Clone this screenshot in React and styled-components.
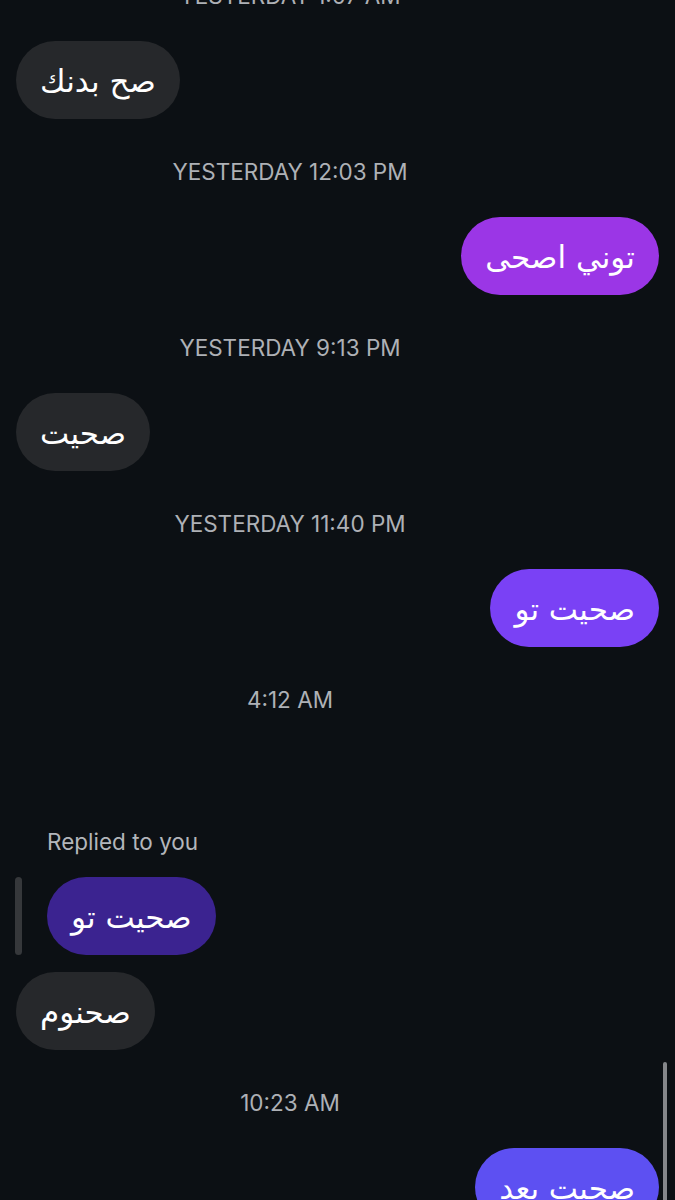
import React from 'react';
import styled, { createGlobalStyle } from 'styled-components';

const GlobalStyle = createGlobalStyle`
  html, body {
    margin: 0;
    padding: 0;
    background: #0c1014;
  }
  body {
    width: 675px;
    height: 1200px;
    overflow: hidden;
    font-family: Inter, Roboto, "Liberation Sans", sans-serif;
  }
`;

const Screen = styled.div`
  position: relative;
  width: 675px;
  height: 1200px;
  overflow: hidden;
  background: #0c1014;
`;

const Thread = styled.div`
  display: flex;
  flex-direction: column;
  margin-top: -15px;
`;

const Stamp = styled.div`
  width: 580px;
  height: 22px;
  line-height: 22px;
  margin: ${(p) => (p.$first ? '0' : '42px')} 0 34px;
  text-align: center;
  font-size: 22.5px;
  color: #aeb1b6;
  white-space: nowrap;
`;

const Row = styled.div`
  display: flex;
  justify-content: ${(p) => (p.$out ? 'flex-end' : 'flex-start')};
  padding: 0 16px;
`;

const Bubble = styled.div`
  height: 78px;
  box-sizing: border-box;
  padding: 2px 24px 0;
  border-radius: 39px;
  display: flex;
  align-items: center;
  direction: rtl;
  font-family: "DejaVu Sans", "Noto Sans", sans-serif;
  font-size: 31px;
  color: #ffffff;
  background: ${(p) => p.$bg || '#26282b'};
  white-space: nowrap;
`;

const ReplyBlock = styled.div`
  display: flex;
  flex-direction: column;
  margin-top: 86px;
  margin-bottom: 17px;
`;

const ReplyLabel = styled.div`
  padding-left: 47px;
  font-size: 22.5px;
  line-height: 22px;
  color: #b3b6bb;
  margin-bottom: 24px;
`;

const ReplyRow = styled.div`
  display: flex;
  align-items: stretch;
  gap: 25px;
  padding-left: 15px;
`;

const QuoteBar = styled.div`
  width: 7px;
  border-radius: 4px;
  background: #36383b;
`;

const ScrollThumb = styled.div`
  position: absolute;
  right: 8px;
  top: 1062px;
  width: 4px;
  height: 150px;
  border-radius: 2px;
  background: #85878a;
`;

const App = () => {
  return (
    <Screen>
      <GlobalStyle />
      <Thread>
        <Stamp $first>YESTERDAY 1:07 AM</Stamp>
        <Row>
          <Bubble>صح بدنك</Bubble>
        </Row>

        <Stamp>YESTERDAY 12:03 PM</Stamp>
        <Row $out>
          <Bubble $bg="#9b36e6">توني اصحى</Bubble>
        </Row>

        <Stamp>YESTERDAY 9:13 PM</Stamp>
        <Row>
          <Bubble>صحيت</Bubble>
        </Row>

        <Stamp>YESTERDAY 11:40 PM</Stamp>
        <Row $out>
          <Bubble $bg="#7a41f5">صحيت تو</Bubble>
        </Row>

        <Stamp>4:12 AM</Stamp>

        <ReplyBlock>
          <ReplyLabel>Replied to you</ReplyLabel>
          <ReplyRow>
            <QuoteBar />
            <Bubble $bg="#3b2390">صحيت تو</Bubble>
          </ReplyRow>
        </ReplyBlock>

        <Row>
          <Bubble>صحنوم</Bubble>
        </Row>

        <Stamp>10:23 AM</Stamp>
        <Row $out>
          <Bubble $bg="#5d50f2">صحيت بعد</Bubble>
        </Row>
      </Thread>
      <ScrollThumb />
    </Screen>
  );
};

export default App;
